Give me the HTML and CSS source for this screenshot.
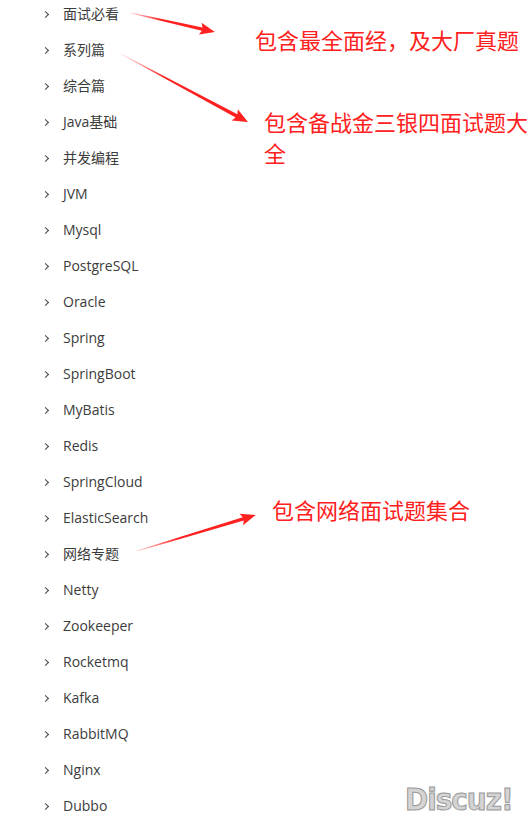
FILE: index.html
```html
<!DOCTYPE html>
<html lang="zh-CN">
<head>
  <meta charset="UTF-8">
  <title>面试题目录</title>
  <link rel="stylesheet" href="styles.css">
</head>
<body>
  <div class="page">
    <!-- Menu list -->
    <ul class="menu">
      <li><span class="chev"></span>面试必看</li>
      <li><span class="chev"></span>系列篇</li>
      <li><span class="chev"></span>综合篇</li>
      <li><span class="chev"></span>Java基础</li>
      <li><span class="chev"></span>并发编程</li>
      <li><span class="chev"></span>JVM</li>
      <li><span class="chev"></span>Mysql</li>
      <li><span class="chev"></span>PostgreSQL</li>
      <li><span class="chev"></span>Oracle</li>
      <li><span class="chev"></span>Spring</li>
      <li><span class="chev"></span>SpringBoot</li>
      <li><span class="chev"></span>MyBatis</li>
      <li><span class="chev"></span>Redis</li>
      <li><span class="chev"></span>SpringCloud</li>
      <li><span class="chev"></span>ElasticSearch</li>
      <li><span class="chev"></span>网络专题</li>
      <li><span class="chev"></span>Netty</li>
      <li><span class="chev"></span>Zookeeper</li>
      <li><span class="chev"></span>Rocketmq</li>
      <li><span class="chev"></span>Kafka</li>
      <li><span class="chev"></span>RabbitMQ</li>
      <li><span class="chev"></span>Nginx</li>
      <li><span class="chev"></span>Dubbo</li>
    </ul>

    <!-- Annotations drawn over the screenshot -->
    <svg class="arrows" width="529" height="826" viewBox="0 0 529 826">
      <defs>
        <linearGradient id="fade" x1="0" y1="0" x2="1" y2="0">
          <stop offset="0" stop-color="#ff2020" stop-opacity="0.15"/>
          <stop offset="0.35" stop-color="#ff2020" stop-opacity="1"/>
          <stop offset="1" stop-color="#ff2020" stop-opacity="1"/>
        </linearGradient>
      </defs>
      <polygon transform="translate(131,13) rotate(12.75)" fill="url(#fade)"
        points="0,-0.4 73,-1.7 71,-6 86,0 71,6 73,1.7 0,0.4"/>
      <polygon transform="translate(121,54) rotate(28.16)" fill="url(#fade)"
        points="0,-0.4 131,-1.9 129,-6.5 144,0 129,6.5 131,1.9 0,0.4"/>
      <polygon transform="translate(137,551) rotate(-16.83)" fill="url(#fade)"
        points="0,-0.4 111,-1.8 109,-6 124,0 109,6 111,1.8 0,0.4"/>
    </svg>

    <p class="note note-1">包含最全面经，及大厂真题</p>
    <p class="note note-2">包含备战金三银四面试题大全</p>
    <p class="note note-3">包含网络面试题集合</p>

    <div class="watermark">Discuz!</div>
  </div>
</body>
</html>
```

FILE: styles.css
```css
/* Page */
body {
  margin: 0;
  background-color: #fff;
  font-family: "Open Sans", "Noto Sans CJK SC", sans-serif;
  overflow: hidden;
}
.page {
  position: relative;
  width: 529px;
  height: 826px;
  overflow: hidden;
}

/* Menu list */
.menu {
  list-style-type: none;
  margin: -5px 0 0 0;
  padding: 0 0 0 44px;
}
.menu li {
  display: flex;
  align-items: center;
  height: 36px;
  font-size: 14px;
  color: #3c3c3c;
}
.chev {
  width: 19px;
  height: 36px;
  display: flex;
  align-items: center;
}
.chev::before {
  content: "";
  width: 4px;
  height: 4px;
  margin: 3px 0 0 -1px;
  border-top: 1px solid #444;
  border-right: 1px solid #444;
  transform: rotate(45deg);
}

/* Annotations */
.arrows {
  position: absolute;
  left: 0;
  top: 0;
}
.note {
  position: absolute;
  margin: 0;
  font-family: "Noto Sans CJK SC", sans-serif;
  font-size: 22px;
  line-height: 31px;
  color: #ff2020;
}
.note-1 {
  left: 255px;
  top: 24px;
}
.note-2 {
  left: 264px;
  top: 106px;
  width: 270px;
}
.note-3 {
  left: 272px;
  top: 494px;
}

/* Watermark */
.watermark {
  position: absolute;
  left: 405px;
  top: 781px;
  font-family: "DejaVu Sans Condensed", "DejaVu Sans", sans-serif;
  font-weight: bold;
  font-size: 31px;
  letter-spacing: -1px;
  color: #d4d4d4;
  -webkit-text-stroke: 1px #999;
}
```
